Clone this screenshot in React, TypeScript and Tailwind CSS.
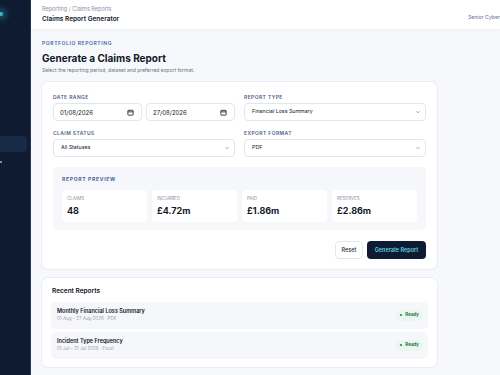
import React from 'react';

const font = { fontFamily: 'Inter, "Noto Sans", sans-serif' };

function CalendarIcon() {
  return (
    <svg width="7" height="7" viewBox="0 0 16 16" fill="none" stroke="#1f2937" strokeWidth="2">
      <rect x="2" y="3" width="12" height="11" rx="1" />
      <path d="M2 6.5h12" />
    </svg>
  );
}

function Chevron() {
  return (
    <svg width="6" height="6" viewBox="0 0 16 16" fill="none" stroke="#6b7280" strokeWidth="1.8">
      <path d="M4 6l4 4 4-4" />
    </svg>
  );
}

function Label({ children }: { children: React.ReactNode }) {
  return (
    <div className="text-[5px] font-semibold uppercase tracking-[0.08em] text-[#4d5f8a] leading-none mb-[3px]">
      {children}
    </div>
  );
}

function DateField({ value }: { value: string }) {
  return (
    <div className="flex h-[18px] flex-1 items-center justify-between rounded-[4px] border border-[#e3e6ed] bg-white pl-[6px] pr-[7px] text-[6px] text-[#111827]">
      <span>{value}</span>
      <CalendarIcon />
    </div>
  );
}

function SelectField({ value }: { value: string }) {
  return (
    <div className="flex h-[18px] items-center justify-between rounded-[4px] border border-[#e3e6ed] bg-white pl-[7px] pr-[4px] text-[5.3px] text-[#111827]">
      <span>{value}</span>
      <Chevron />
    </div>
  );
}

const stats = [
  { label: 'Claims', value: '48' },
  { label: 'Incurred', value: '£4.72m' },
  { label: 'Paid', value: '£1.86m' },
  { label: 'Reserves', value: '£2.86m' },
];

const recent = [
  { title: 'Monthly Financial Loss Summary', sub: '01 Aug – 27 Aug 2026 · PDF' },
  { title: 'Incident Type Frequency', sub: '01 Jul – 31 Jul 2026 · Excel' },
];

export default function App() {
  return (
    <div className="flex h-[375px] w-[500px] overflow-hidden bg-[#f7f8fb]" style={font}>
      {/* Sidebar (mostly collapsed off-screen) */}
      <aside className="flex w-[31px] shrink-0 flex-col border-r border-[#2a3650] bg-[#0e1b31]">
        <div className="mt-[12px] h-[4px] w-[4px] -ml-[1px] rounded-full bg-[#3fb4d6] shadow-[0_0_6px_3px_rgba(56,178,214,0.45)]" />
        <div className="mt-[120px] h-[16px] w-[27px] rounded-r-[4px] bg-[#182a45]" />
        <div className="mt-[9px] h-[2px] w-[2px] bg-[#7d8aa3]" />
      </aside>

      <div className="flex min-w-0 flex-1 flex-col">
        {/* Header */}
        <header className="flex h-[29px] shrink-0 items-center justify-between bg-white pl-[11px] shadow-[0_1px_2px_rgba(15,23,42,0.04)]">
          <div className="flex flex-col gap-[3px]">
            <span className="text-[5.5px] leading-none text-[#8b93a5]">Reporting / Claims Reports</span>
            <span className="text-[6.5px] font-semibold leading-none text-[#0f172a]">Claims Report Generator</span>
          </div>
          <span className="mt-[7px] whitespace-nowrap pl-[4px] text-[5.2px] text-[#60709a]">Senior Cyber</span>
        </header>

        <main className="flex flex-col px-[11px] pt-[12px]">
          <div className="w-[395px]">
            <div className="text-[5px] font-semibold uppercase tracking-[0.12em] text-[#4466a8] leading-none">
              Portfolio Reporting
            </div>
            <h1 className="mt-[7px] text-[10px] font-bold leading-none text-[#0f172a]">Generate a Claims Report</h1>
            <p className="mt-[5px] text-[5px] leading-none text-[#6b7280]">
              Select the reporting period, dataset and preferred export format.
            </p>

            {/* Form card */}
            <section className="mt-[9px] rounded-[6px] bg-white px-[11px] pb-[10px] pt-[13px] shadow-[0_0_0_1px_rgba(226,230,238,0.6)]">
              <div className="grid grid-cols-2 gap-x-[9px] gap-y-[10px]">
                <div>
                  <Label>Date Range</Label>
                  <div className="flex gap-[4px]">
                    <DateField value="01/08/2026" />
                    <DateField value="27/08/2026" />
                  </div>
                </div>
                <div>
                  <Label>Report Type</Label>
                  <SelectField value="Financial Loss Summary" />
                </div>
                <div>
                  <Label>Claim Status</Label>
                  <SelectField value="All Statuses" />
                </div>
                <div>
                  <Label>Export Format</Label>
                  <SelectField value="PDF" />
                </div>
              </div>

              <div className="mt-[10px] rounded-[5px] bg-[#f6f7fb] px-[9px] pb-[8px] pt-[10px]">
                <div className="text-[5px] font-bold uppercase tracking-[0.14em] text-[#4a5f94] leading-none">
                  Report Preview
                </div>
                <div className="mt-[8px] grid grid-cols-4 gap-[5px]">
                  {stats.map(s => (
                    <div key={s.label} className="h-[32px] rounded-[4px] bg-white px-[5px] pt-[7px]">
                      <div className="text-[4.5px] uppercase leading-none text-[#8a93a8]">{s.label}</div>
                      <div className="mt-[4px] text-[9px] font-bold leading-none text-[#111827]">{s.value}</div>
                    </div>
                  ))}
                </div>
              </div>

              <div className="mt-[11px] flex justify-end gap-[4px]">
                <button className="h-[18px] w-[28px] rounded-[4px] border border-[#e3e6ed] bg-white text-[5.5px] font-medium text-[#1f2937]">
                  Reset
                </button>
                <button className="h-[18px] w-[59px] rounded-[4px] bg-[#0e1b31] text-[5.5px] font-semibold text-[#5ccfe6]">
                  Generate Report
                </button>
              </div>
            </section>

            {/* Recent reports */}
            <section className="mt-[9px] rounded-[6px] bg-white px-[9px] pb-[8px] pt-[10px] shadow-[0_0_0_1px_rgba(226,230,238,0.6)]">
              <h2 className="pl-[1px] text-[6.5px] font-semibold leading-none text-[#111827]">Recent Reports</h2>
              <div className="mt-[7px] flex flex-col gap-[3px]">
                {recent.map(r => (
                  <div key={r.title} className="flex h-[27px] items-center justify-between rounded-[5px] bg-[#f6f7fb] pl-[6px] pr-[5px]">
                    <div className="flex flex-col gap-[3px]">
                      <span className="text-[5.5px] font-semibold leading-none text-[#111827]">{r.title}</span>
                      <span className="text-[4.5px] leading-none text-[#9aa1b2]">{r.sub}</span>
                    </div>
                    <span className="flex h-[11px] items-center gap-[3px] rounded-full bg-[#e9f7ef] px-[4px] text-[4.5px] font-semibold text-[#166534]">
                      <span className="h-[2.5px] w-[2.5px] rounded-full bg-[#15803d]" />
                      Ready
                    </span>
                  </div>
                ))}
              </div>
            </section>
          </div>
        </main>
      </div>
    </div>
  );
}
